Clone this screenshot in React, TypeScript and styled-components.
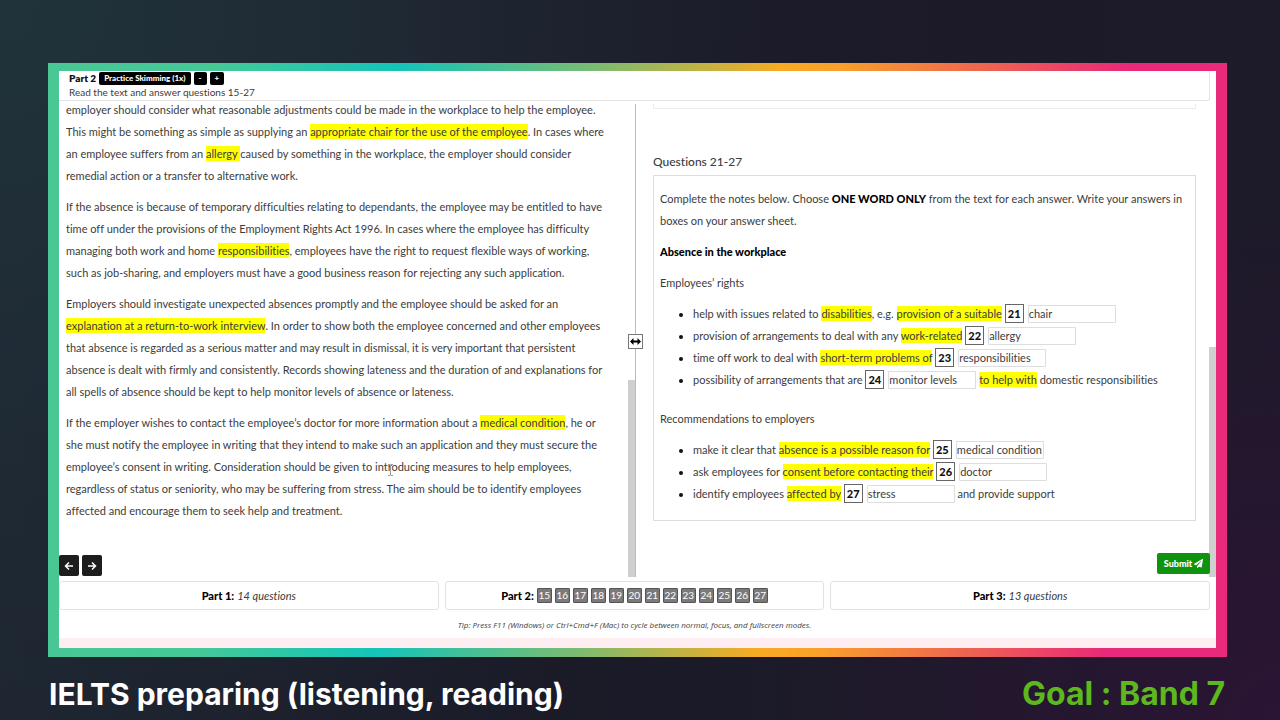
import React from "react";
import styled, { createGlobalStyle } from "styled-components";

const GlobalStyle = createGlobalStyle`
  * { box-sizing: border-box; }
  body { margin: 0; background: #1c1c29; }
  button, input { font: inherit; color: inherit; }
`;

const Page = styled.main`
  min-height: 100vh;
  display: flex;
  flex-direction: column;
  padding: 63px 53px 0 48px;
  font-family: Lato, "Open Sans", sans-serif;
  font-size: 11px;
  line-height: 22px;
  font-variant-ligatures: none;
  color: #3c3c3c;
  background:
    radial-gradient(circle at 0% 0%, #20333a 0%, rgba(32, 45, 56, 0.6) 30%, transparent 55%),
    radial-gradient(circle at 100% 100%, #2b1434 0%, transparent 35%),
    linear-gradient(90deg, #1d2530 0%, #1b1b28 45%, #1d1a29 100%);
`;

const Frame = styled.section`
  flex: 1 0 auto;
  display: flex;
  flex-direction: column;
  padding: 8px 11px 9px;
  background: linear-gradient(92deg, #49c795 0%, #45c997 14%, #14c4b9 29%, #7dbb70 46%, #f7ab22 61%, #f9a02c 66%, #ee6550 78%, #e92979 90%);
`;

const Screen = styled.div`
  flex: 1 0 auto;
  display: flex;
  flex-direction: column;
  background: #fff;
`;

const Header = styled.header`
  height: 30px;
  margin-right: 6px;
  padding-left: 10px;
  border: solid #e4e4e4;
  border-width: 0 1px 1px 0;
  border-radius: 0 0 3px 0;
  line-height: 14px;
`;

const HeaderRow = styled.div`
  display: flex;
  align-items: center;
  gap: 3px;
  height: 14px;
`;

const PartTitle = styled.h1`
  margin: 0;
  font-size: 10px;
  font-weight: 800;
  color: #111;
`;

const Instruction = styled.p`
  margin: 0;
  font-size: 10px;
`;

const TinyButton = styled.button`
  height: 13px;
  padding: 0 5px;
  border: 0;
  border-radius: 2px;
  background: #000;
  color: #fff;
  font-size: 8px;
  font-weight: 900;
  line-height: 13px;
`;

const Workspace = styled.div`
  position: relative;
  flex: 1 0 0px;
  display: grid;
  grid-template-columns: minmax(0, 577fr) minmax(0, 580fr);
  grid-template-rows: minmax(0, 1fr);
  margin-top: 3px;
  min-height: 473px;
`;

const Pane = styled.div`
  position: relative;
  display: flex;
  flex-direction: column;
  justify-content: flex-end;
  overflow: hidden;
`;

const Passage = styled(Pane)`
  gap: 9px;
  padding: 0 8px 55px 7px;
  border-right: 1px solid #bbb;
  white-space: nowrap;
`;

const Questions = styled(Pane)`
  padding: 0 20px 56px 17px;
`;

const Paragraph = styled.p`
  position: relative;
  margin: 0;
`;

const Mark = styled.mark`
  padding: 1px 0;
  color: inherit;
  background: #ff0;
`;

const Thumb = styled.span<{ $length: number }>`
  position: absolute;
  right: 0;
  bottom: 0;
  width: 7px;
  height: ${(p) => p.$length}px;
  background: #cfcfcf;
`;

const ResizeHandle = styled.button`
  position: absolute;
  top: 230px;
  left: calc(100% * 577 / 1157 - 8px);
  display: flex;
  align-items: center;
  justify-content: center;
  width: 15px;
  height: 15px;
  padding: 0;
  border: 1px solid #777;
  background: #fff;
`;

const TextCursor = styled.svg`
  position: absolute;
  left: 321px;
  top: 52px;
`;

const PageNav = styled.nav`
  position: absolute;
  left: 0;
  bottom: 1px;
  display: flex;
  gap: 3px;
`;

const NavButton = styled.button`
  display: flex;
  align-items: center;
  justify-content: center;
  width: 20px;
  height: 21px;
  padding: 0;
  border: 0;
  border-radius: 2px;
  background: #1d1d1d;
`;

const Submit = styled.button`
  position: absolute;
  right: 6px;
  bottom: 3px;
  display: flex;
  align-items: center;
  justify-content: center;
  gap: 2px;
  width: 53px;
  height: 21px;
  padding: 0;
  border: 0;
  border-radius: 2px;
  background: #0f930f;
  color: #fff;
  font-size: 9px;
  font-weight: 900;
`;

const CardEnd = styled.div`
  height: 8px;
  border: 1px solid #ececec;
  border-top: 0;
`;

const QuestionHeading = styled.h2`
  margin: 42px 0 2px;
  font-size: 12px;
  font-weight: 500;
`;

const Card = styled.section`
  height: 346px;
  padding: 12px 6px;
  border: 1px solid #ddd;
  white-space: nowrap;
`;

const Notes = styled.h3`
  margin: 9px 0;
  font-size: 11px;
  font-weight: 900;
  color: #000;
`;

const Strong = styled.strong`
  font-weight: 900;
  color: #000;
`;

const List = styled.ul`
  margin: 9px 0 17px;
  padding-left: 33px;
`;

const Item = styled.li`
  height: 22px;
  &::marker { color: #111; }
`;

const Answer = styled.label`
  display: inline-flex;
  align-items: flex-end;
  gap: 4px;
  height: 20px;
  vertical-align: top;
`;

const Num = styled.b`
  width: 19px;
  height: 19px;
  border: 1px solid #666;
  text-align: center;
  line-height: 17px;
  font-weight: 900;
  color: #111;
`;

const Field = styled.input`
  width: 88px;
  height: 18px;
  padding: 0;
  border: 1px solid #ddd;
  border-radius: 1px;
  background: #fff;
`;

const Parts = styled.nav`
  display: grid;
  grid-template-columns: repeat(3, minmax(0, 1fr));
  gap: 6px;
  margin: 4px 6px 0 0;
`;

const PartBox = styled.div`
  display: flex;
  align-items: center;
  justify-content: center;
  gap: 3px;
  height: 29px;
  border: 1px solid #e2e2e2;
  border-radius: 3px;
`;

const QuestionButton = styled.button`
  width: 15px;
  height: 15px;
  padding: 0;
  border: 1px solid #555;
  border-radius: 1px;
  background: #7a7a7a;
  color: #fff;
  font-size: 10px;
  line-height: 13px;
`;

const Tip = styled.p`
  margin: 8px 6px 7px 0;
  font-family: "Open Sans", sans-serif;
  font-size: 8px;
  font-style: italic;
  line-height: 13px;
  text-align: center;
`;

const PinkStrip = styled.div`
  height: 10px;
  background: #ffeef1;
`;

const Caption = styled.footer`
  display: flex;
  align-items: center;
  justify-content: space-between;
  height: 63px;
  padding: 10px 2px 0 1px;
  font-family: Inter, sans-serif;
  font-size: 30px;
  font-weight: 700;
  line-height: 34px;
  color: #fff;
`;

const Goal = styled.span`
  font-size: 32px;
  color: #5cb81c;
`;

type Blank = { n: number; value: string };

const Gap = ({ n, value }: Blank) => (
  <Answer>
    <Num>{n}</Num>
    <Field defaultValue={value} />
  </Answer>
);

const ArrowIcon = ({ flip }: { flip?: boolean }) => (
  <svg width="10" height="10" viewBox="0 0 10 10" fill="none" stroke="#fff" strokeWidth="1.5">
    <path d={flip ? "M1 5h7.500M5 1.500 8.500 5 5 8.500" : "M9 5H1.500M5 1.500 1.500 5 5 8.500"} />
  </svg>
);

const questionNumbers = Array.from({ length: 13 }, (_, i) => i + 15);

export default function App() {
  return (
    <Page>
      <GlobalStyle />
      <Frame>
        <Screen>
          <Header>
            <HeaderRow>
              <PartTitle>Part 2</PartTitle>
              <TinyButton>Practice Skimming (1x)</TinyButton>
              <TinyButton>-</TinyButton>
              <TinyButton>+</TinyButton>
            </HeaderRow>
            <Instruction>Read the text and answer questions 15-27</Instruction>
          </Header>

          <Workspace>
            <Passage>
              <Paragraph>
                employer should consider what reasonable adjustments could be made in the workplace to help the employee.<br />
                This might be something as simple as supplying an <Mark>appropriate chair for the use of the employee</Mark>. In cases where<br />
                an employee suffers from an <Mark>allergy </Mark>caused by something in the workplace, the employer should consider<br />
                remedial action or a transfer to alternative work.
              </Paragraph>
              <Paragraph>
                If the absence is because of temporary difficulties relating to dependants, the employee may be entitled to have<br />
                time off under the provisions of the Employment Rights Act 1996. In cases where the employee has difficulty<br />
                managing both work and home <Mark>responsibilities</Mark>, employees have the right to request flexible ways of working,<br />
                such as job-sharing, and employers must have a good business reason for rejecting any such application.
              </Paragraph>
              <Paragraph>
                Employers should investigate unexpected absences promptly and the employee should be asked for an<br />
                <Mark>explanation at a return-to-work interview</Mark>. In order to show both the employee concerned and other employees<br />
                that absence is regarded as a serious matter and may result in dismissal, it is very important that persistent<br />
                absence is dealt with firmly and consistently. Records showing lateness and the duration of and explanations for<br />
                all spells of absence should be kept to help monitor levels of absence or lateness.
              </Paragraph>
              <Paragraph>
                If the employer wishes to contact the employee’s doctor for more information about a <Mark>medical condition</Mark>, he or<br />
                she must notify the employee in writing that they intend to make such an application and they must secure the<br />
                employee’s consent in writing. Consideration should be given to introducing measures to help employees,<br />
                regardless of status or seniority, who may be suffering from stress. The aim should be to identify employees<br />
                affected and encourage them to seek help and treatment.
                <TextCursor width="7" height="12" viewBox="0 0 7 12" fill="none" stroke="#999">
                  <path d="M1 .5h2l.5.5.5-.5h2M3.500 1v10M1 11.500h2l.5-.5.5.5h2" />
                </TextCursor>
              </Paragraph>
              <Thumb $length={197} />
            </Passage>

            <Questions>
              <CardEnd />
              <QuestionHeading>Questions 21-27</QuestionHeading>
              <Card>
                <Paragraph>
                  Complete the notes below. Choose <Strong>ONE WORD ONLY</Strong> from the text for each answer. Write your answers in<br />
                  boxes on your answer sheet.
                </Paragraph>
                <Notes>Absence in the workplace</Notes>
                <Paragraph>Employees’ rights</Paragraph>
                <List>
                  <Item>help with issues related to <Mark>disabilities</Mark>, e.g. <Mark>provision of a suitable</Mark> <Gap n={21} value="chair" /></Item>
                  <Item>provision of arrangements to deal with any <Mark>work-related</Mark> <Gap n={22} value="allergy" /></Item>
                  <Item>time off work to deal with <Mark>short-term problems of</Mark> <Gap n={23} value="responsibilities" /></Item>
                  <Item>possibility of arrangements that are <Gap n={24} value="monitor levels" /> <Mark>to help with</Mark> domestic responsibilities</Item>
                </List>
                <Paragraph>Recommendations to employers</Paragraph>
                <List>
                  <Item>make it clear that <Mark>absence is a possible reason for</Mark> <Gap n={25} value="medical condition" /></Item>
                  <Item>ask employees for <Mark>consent before contacting their</Mark> <Gap n={26} value="doctor" /></Item>
                  <Item>identify employees <Mark>affected by</Mark> <Gap n={27} value="stress" /> and provide support</Item>
                </List>
              </Card>
              <Thumb $length={230} />
            </Questions>

            <ResizeHandle aria-label="Resize panels">
              <svg width="11" height="7" viewBox="0 0 11 7" fill="#000">
                <path d="M0 3.500 3.500 0v2.600h4V0L11 3.500 7.500 7V4.400h-4V7z" />
              </svg>
            </ResizeHandle>
            <PageNav>
              <NavButton aria-label="Previous"><ArrowIcon /></NavButton>
              <NavButton aria-label="Next"><ArrowIcon flip /></NavButton>
            </PageNav>
            <Submit>
              Submit
              <svg width="9" height="9" viewBox="0 0 512 512" fill="#fff">
                <path d="M476 3.200 12.500 270.600c-18.100 10.400-15.800 35.600 2.200 43.200L121 358.400l287.300-253.200c5.500-4.900 13.300 2.600 8.600 8.300L176 407v80.500c0 23.600 28.500 32.900 42.500 15.800L282 426l124.600 52.200c14.200 6 30.400-2.900 33-18.200l72-432C515 7.800 493.300-6.800 476 3.200z" />
              </svg>
            </Submit>
          </Workspace>

          <Parts>
            <PartBox><Strong>Part 1:</Strong><em>14 questions</em></PartBox>
            <PartBox>
              <Strong>Part 2:</Strong>
              {questionNumbers.map((n) => (
                <QuestionButton key={n}>{n}</QuestionButton>
              ))}
            </PartBox>
            <PartBox><Strong>Part 3:</Strong><em>13 questions</em></PartBox>
          </Parts>
          <Tip>Tip: Press F11 (Windows) or Ctrl+Cmd+F (Mac) to cycle between normal, focus, and fullscreen modes.</Tip>
          <PinkStrip />
        </Screen>
      </Frame>
      <Caption>
        <span>IELTS preparing (listening, reading)</span>
        <Goal>Goal : Band 7</Goal>
      </Caption>
    </Page>
  );
}
